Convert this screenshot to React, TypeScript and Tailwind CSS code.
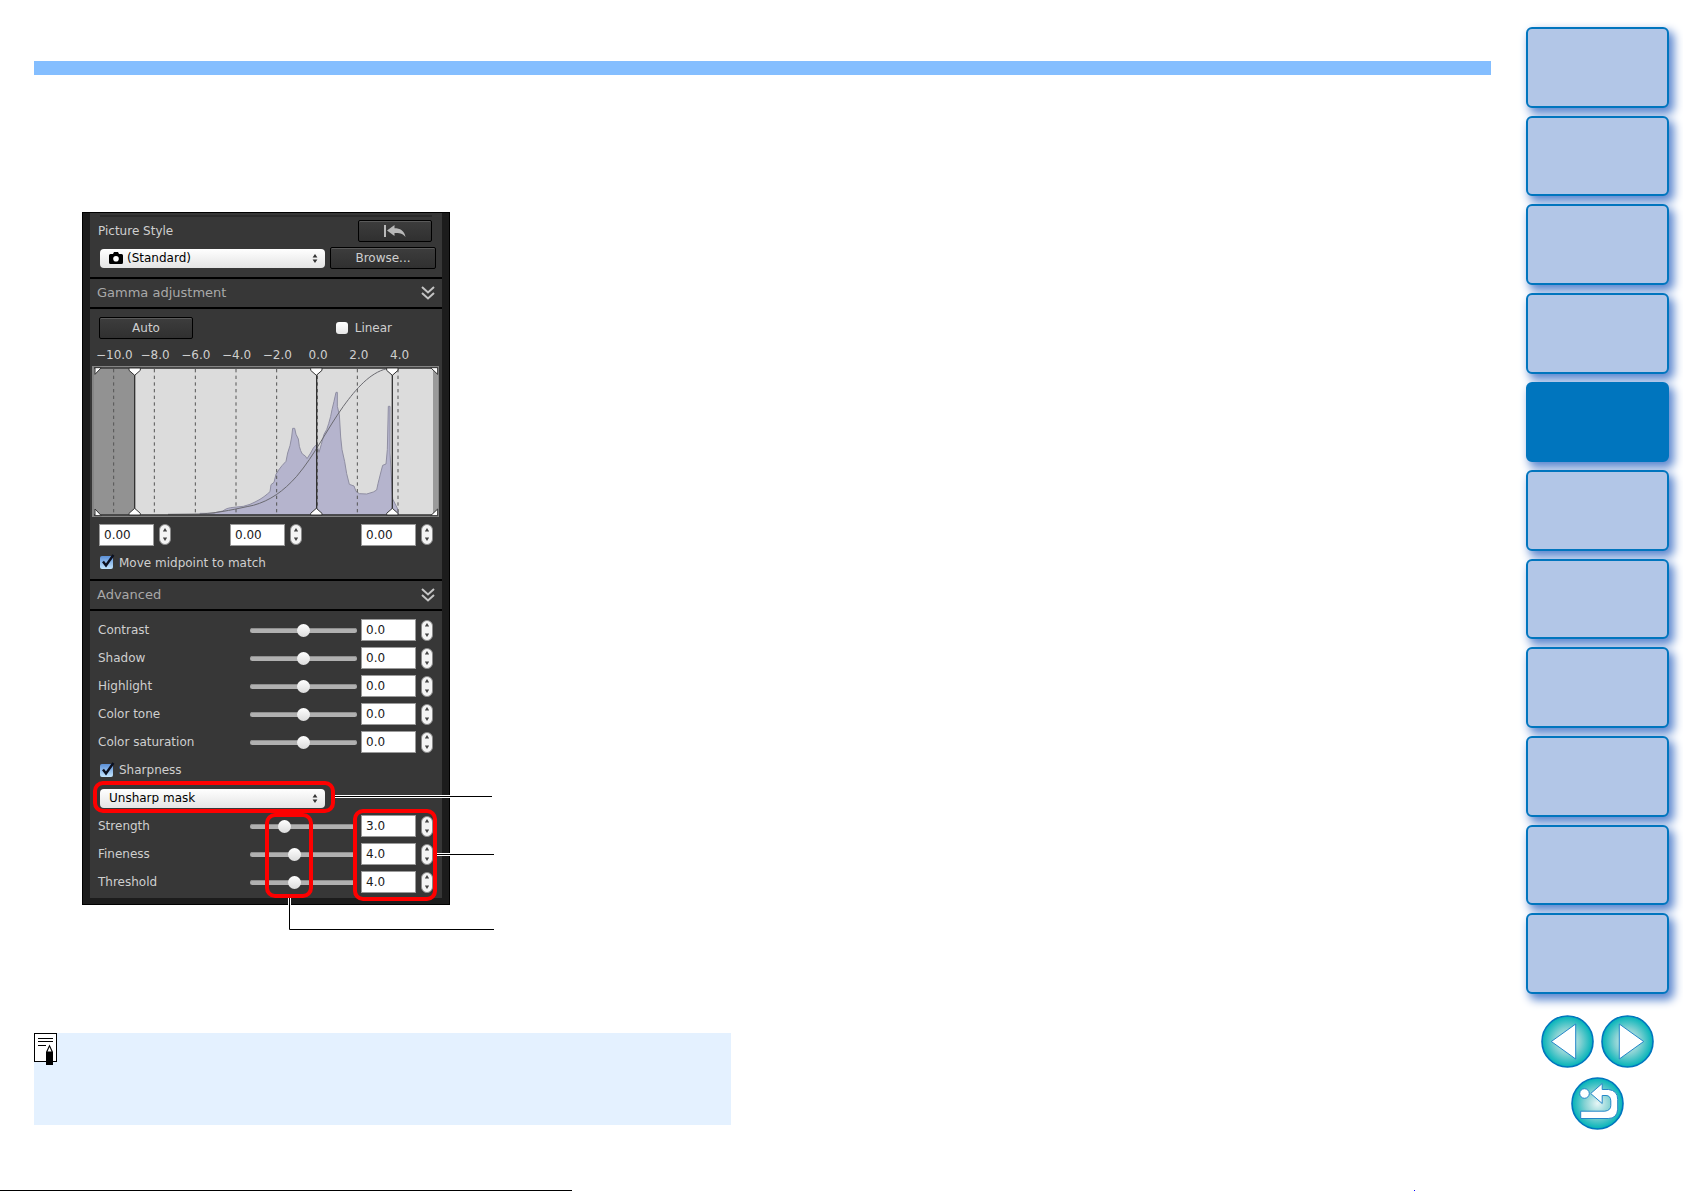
import { useState } from "react";

type Adjustment = {
  label: string;
  value: string;
  position: number;
};

const chapters = Array.from({ length: 11 }, (_, index) => index + 1);
const activeChapter = 5;

const stops = ["−10.0", "−8.0", "−6.0", "−4.0", "−2.0", "0.0", "2.0", "4.0"];

const toneAdjustments: Adjustment[] = [
  { label: "Contrast", value: "0.0", position: 5 },
  { label: "Shadow", value: "0.0", position: 5 },
  { label: "Highlight", value: "0.0", position: 5 },
  { label: "Color tone", value: "0.0", position: 5 },
  { label: "Color saturation", value: "0.0", position: 5 }
];

const sharpnessAdjustments: Adjustment[] = [
  { label: "Strength", value: "3.0", position: 3 },
  { label: "Fineness", value: "4.0", position: 4 },
  { label: "Threshold", value: "4.0", position: 4 }
];

const gridLines = [131, 253, 376, 498, 620, 742, 862, 984];

function Stepper({ label }: { label: string }) {
  return (
    <span className="flex h-[21px] w-3 shrink-0 flex-col overflow-hidden rounded-full border border-[#8a8a8a] bg-[#f4f4f4]">
      <button
        type="button"
        aria-label={`Increase ${label}`}
        className="flex flex-1 items-center justify-center"
      >
        <svg viewBox="0 0 6 4" className="h-1 w-1.5" fill="#444">
          <path d="M3 0 5.2 3.6H.8Z" />
        </svg>
      </button>
      <button
        type="button"
        aria-label={`Decrease ${label}`}
        className="flex flex-1 items-center justify-center"
      >
        <svg viewBox="0 0 6 4" className="h-1 w-1.5" fill="#444">
          <path d="M3 4 5.2.4H.8Z" />
        </svg>
      </button>
    </span>
  );
}

function NumberField({ label, value }: { label: string; value: string }) {
  return (
    <div className="flex items-center gap-[5px]">
      <input
        type="text"
        aria-label={label}
        defaultValue={value}
        className="h-[22px] w-[55px] border border-[#9a9a9a] bg-white px-1 text-xs text-[#1a1a1a]"
      />
      <Stepper label={label} />
    </div>
  );
}

function AdjustmentRow({ label, value, position }: Adjustment) {
  return (
    <div className="flex h-7 items-center pl-2">
      <label htmlFor={label} className="w-[152px]">
        {label}
      </label>
      <input
        id={label}
        type="range"
        min={0}
        max={10}
        step={1}
        defaultValue={position}
        className="mr-1 h-[14px] w-[107px] appearance-none bg-transparent [&::-webkit-slider-runnable-track]:h-[5px] [&::-webkit-slider-runnable-track]:rounded-full [&::-webkit-slider-runnable-track]:bg-[#b0b0b0] [&::-webkit-slider-runnable-track]:shadow-[inset_0_1px_0_#8e8e8e] [&::-webkit-slider-thumb]:-mt-1 [&::-webkit-slider-thumb]:size-[13px] [&::-webkit-slider-thumb]:appearance-none [&::-webkit-slider-thumb]:rounded-full [&::-webkit-slider-thumb]:bg-linear-to-b [&::-webkit-slider-thumb]:from-white [&::-webkit-slider-thumb]:to-[#dcdcdc]"
      />
      <NumberField label={`${label} value`} value={value} />
    </div>
  );
}

function CheckRow({ label }: { label: string }) {
  const [checked, setChecked] = useState(true);

  return (
    <label className="flex items-center gap-[6px]">
      <span className="relative size-[13px]">
        <input
          type="checkbox"
          checked={checked}
          onChange={(event) => setChecked(event.target.checked)}
          className="block size-[13px] appearance-none rounded-xs bg-linear-to-b from-[#5b8fd6] to-[#c4e6ff]"
        />
        {checked ? (
          <svg
            viewBox="0 0 15 15"
            className="pointer-events-none absolute -top-[2px] left-0 size-[15px]"
            fill="none"
            stroke="#0b1020"
            strokeWidth="2.4"
          >
            <path d="M3 7.5 6 11.5 13.4 1" />
          </svg>
        ) : null}
      </span>
      {label}
    </label>
  );
}

function SelectArrows() {
  return (
    <svg
      viewBox="0 0 6 9"
      className="pointer-events-none absolute top-[5px] right-[7px] h-[9px] w-[6px]"
      fill="#333"
    >
      <path d="M3 0 5.4 3.4H.6ZM3 9 5.4 5.6H.6Z" />
    </svg>
  );
}

function SectionHeader({ title }: { title: string }) {
  return (
    <div className="flex h-8 items-center justify-between border-y-2 border-black pr-[7px] pl-[7px] text-[13px] text-[#a9a9a9]">
      <h2>{title}</h2>
      <button type="button" aria-label={`Collapse ${title}`}>
        <svg
          viewBox="0 0 14 14"
          className="size-[14px]"
          fill="none"
          stroke="#c4c4c4"
          strokeWidth="2"
        >
          <path d="M1 1 7 6.5 13 1M1 7 7 12.5 13 7" />
        </svg>
      </button>
    </div>
  );
}

function Histogram() {
  return (
    <svg viewBox="66 49 1041 453" className="ml-[2px] block h-[151px] w-[347px]">
      <rect x="66" y="49" width="1041" height="453" fill="#858585" />
      <rect x="72" y="56" width="1030" height="440" fill="#dcdcdc" />
      <rect x="72" y="56" width="122" height="440" fill="#929292" />
      <rect x="1089" y="56" width="14" height="440" fill="#9a9a9a" />
      <path
        d="M390 495V491H432L440 488 458 484 470 477 482 474 500 472 520 470 540 464 555 457 570 449 582 441 592 433 600 426 603 405 612 398 618 374 626 361 636 348 648 335 653 310 660 288 665 262 668 236H674L678 254 685 268 688 290 692 303 697 313 706 319 711 327 722 310 730 295 740 284 747 308 754 284 762 254 770 240 776 222 782 200 786 180 792 155 798 128H802V170L808 195 812 262 816 300 824 336 830 372 838 404 852 409 858 425 868 432 890 433 910 427 920 421 924 402 932 370 938 347 948 343 952 300 955 170H960V310L968 448 974 460 984 480 986 495Z"
        fill="#b5b4cd"
        stroke="#8f8ea2"
        strokeWidth="3"
      />
      <g stroke="#555" strokeWidth="3" strokeDasharray="10 10">
        {gridLines.map((x) => (
          <path key={x} d={`M${x} 58V496`} />
        ))}
      </g>
      <path
        d="M294 494 390 493C455 489 500 477 550 467C600 453 640 425 680 380C735 315 770 240 820 170C860 115 900 70 950 57H966"
        fill="none"
        stroke="#6a6a70"
        strokeWidth="3"
      />
      <path
        d="M72 55H1104M72 496H1104M194 56V496M740 56V496M967 56V496"
        stroke="#333"
        strokeWidth="4"
      />
      <g fill="#fff" stroke="#333" strokeWidth="3">
        {[194, 739, 967].map((x) => (
          <path
            key={x}
            d={`M${x - 17} 55H${x + 17}V62L${x} 77 ${x - 17} 62ZM${x - 17} 496H${x + 17}V491L${x} 476 ${x - 17} 491Z`}
          />
        ))}
        <path d="M75 54H94L75 74ZM75 498H94L75 478ZM1103 54H1082L1103 74ZM1103 498H1082L1103 478Z" />
      </g>
    </svg>
  );
}

function ToolPalette() {
  return (
    <section
      aria-label="Tool palette"
      className="w-[368px] border border-black bg-[#1c1c1c] px-[7px] pb-[6px] font-['DejaVu_Sans',sans-serif] text-xs text-[#cfcfcf]"
    >
      <div className="bg-[#373737] pb-[2px]">
        <div className="pt-[2px] pb-2">
          <div className="mr-[10px] ml-[10px] h-[2px] bg-[#2a2a2a]" />
          <div className="mt-[3px] flex items-center justify-between pr-[10px] pl-2">
            <label htmlFor="style">Picture Style</label>
            <button
              type="button"
              aria-label="Reset picture style"
              className="flex h-[22px] w-[74px] items-center justify-center rounded-xs border border-black bg-linear-to-b from-[#3d3d3d] to-[#303030] shadow-[inset_0_1px_0_#5a5a5a]"
            >
              <svg viewBox="0 0 22 14" className="h-[14px] w-[22px]" fill="#b9b9b9">
                <path d="M0 1H2V13H0ZM3 6.5 10.5 1V4.2C16 4.2 20.5 6.5 21.5 13C18.5 9.3 15 9 10.5 9V12Z" />
              </svg>
            </button>
          </div>
          <div className="mt-[5px] flex items-center gap-[5px] pl-[10px]">
            <div className="relative">
              <select
                id="style"
                className="block h-[19px] w-[225px] appearance-none rounded-[4px] bg-linear-to-b from-white to-[#e4e4e4] pl-[27px] leading-none text-black"
              >
                <option>(Standard)</option>
              </select>
              <svg
                viewBox="0 0 14 12"
                className="pointer-events-none absolute top-[3px] left-[9px] h-3 w-[14px]"
              >
                <path
                  d="M1.5 2H4L5 0H9L10 2H12.5Q14 2 14 3.5V10.5Q14 12 12.5 12H1.5Q0 12 0 10.5V3.5Q0 2 1.5 2Z"
                  fill="#000"
                />
                <circle cx="7" cy="6.7" r="2.8" fill="#fff" />
              </svg>
              <SelectArrows />
            </div>
            <button
              type="button"
              className="h-[22px] w-[106px] rounded-xs border border-black bg-linear-to-b from-[#3d3d3d] to-[#303030] shadow-[inset_0_1px_0_#5a5a5a]"
            >
              Browse...
            </button>
          </div>
        </div>

        <SectionHeader title="Gamma adjustment" />
        <div className="pt-2">
          <div className="flex items-center justify-between pr-[50px] pl-[9px]">
            <button
              type="button"
              className="h-[22px] w-[94px] rounded-xs border border-black bg-linear-to-b from-[#3d3d3d] to-[#303030] shadow-[inset_0_1px_0_#5a5a5a]"
            >
              Auto
            </button>
            <label className="flex items-center gap-[7px]">
              <input
                type="checkbox"
                className="size-3 appearance-none rounded-[3px] bg-linear-to-b from-white to-[#e6e6e6]"
              />
              Linear
            </label>
          </div>
          <div className="ml-1 grid h-[27px] w-[326px] grid-cols-8 items-center pt-[5px] text-center">
            {stops.map((stop) => (
              <span key={stop}>{stop}</span>
            ))}
          </div>
          <Histogram />
          <div className="mt-[6px] flex h-[23px] items-center justify-between pr-[9px] pl-[9px]">
            <NumberField label="Black point" value="0.00" />
            <NumberField label="Midpoint" value="0.00" />
            <NumberField label="White point" value="0.00" />
          </div>
          <div className="flex h-[33px] items-center pl-[10px]">
            <CheckRow label="Move midpoint to match" />
          </div>
        </div>

        <SectionHeader title="Advanced" />
        <div className="pt-[5px]">
          {toneAdjustments.map((item) => (
            <AdjustmentRow key={item.label} {...item} />
          ))}
          <div className="flex h-7 items-center pl-[10px]">
            <CheckRow label="Sharpness" />
          </div>
          <div className="flex h-7 items-center pl-[10px]">
            <div className="relative">
              <select
                aria-label="Sharpness method"
                className="block h-[19px] w-[225px] appearance-none rounded-[4px] bg-linear-to-b from-white to-[#e4e4e4] pl-[9px] leading-none text-black"
              >
                <option>Unsharp mask</option>
              </select>
              <SelectArrows />
            </div>
          </div>
          {sharpnessAdjustments.map((item) => (
            <AdjustmentRow key={item.label} {...item} />
          ))}
        </div>
      </div>
    </section>
  );
}

// Red frames and leader lines drawn over the palette
function Callouts() {
  return (
    <svg
      viewBox="0 0 414 720"
      className="pointer-events-none absolute top-0 left-0 h-[720px] w-[414px]"
      fill="none"
    >
      <g stroke="#fff" strokeWidth="3">
        <path d="M252 584.5H368M355 642.5H368M207.5 686V694" />
      </g>
      <g stroke="#000">
        <path d="M252 584.5H410M355 642.5H412M207.5 686V717.5H412" />
      </g>
      <g stroke="#fe0000" strokeWidth="4">
        <rect x="13" y="571" width="238" height="28" rx="8" />
        <rect x="185" y="603" width="44" height="81" rx="8" />
        <rect x="273" y="599" width="80" height="88" rx="8" />
      </g>
    </svg>
  );
}

function RoundButton({ label, path }: { label: string; path: string }) {
  return (
    <a href="#page" aria-label={label}>
      <svg viewBox="0 0 53 53" className="block size-[53px]">
        <defs>
          <radialGradient id="teal">
            <stop offset="0" stopColor="#e8f6f6" />
            <stop offset="0.5" stopColor="#85d2d3" />
            <stop offset="1" stopColor="#00b3b8" />
          </radialGradient>
        </defs>
        <circle
          cx="26.5"
          cy="26.5"
          r="25.5"
          fill="url(#teal)"
          stroke="#0075be"
          strokeWidth="1.6"
        />
        <path d={path} fill="#fff" stroke="#2386c8" strokeWidth="1" />
      </svg>
    </a>
  );
}

function ChapterNav() {
  return (
    <aside className="mr-[14px] w-[143px] shrink-0 pt-[27px]">
      <nav aria-label="Chapters" className="flex h-[967px] flex-col gap-2">
        {chapters.map((chapter) => (
          <a
            key={chapter}
            href={`#chapter-${chapter}`}
            aria-label={`Chapter ${chapter}`}
            className={
              chapter === activeChapter
                ? "flex-1 rounded-md border-2 border-[#0075be] bg-[#0075be] shadow-[4px_5px_10px_1px_#5c87cf]"
                : "flex-1 rounded-md border-2 border-[#0075be] bg-[#b2c6e7] shadow-[4px_5px_10px_1px_#5c87cf]"
            }
          />
        ))}
      </nav>
      <div className="mt-[21px] flex flex-wrap justify-center gap-x-[7px] gap-y-[9px]">
        <RoundButton label="Previous page" path="M34.7 9V44L10.3 26.5Z" />
        <RoundButton label="Next page" path="M18.3 9V44L42.7 26.5Z" />
        <RoundButton
          label="Return"
          path="M18.3 16.5A4.8 4.8 0 1 1 8.7 16.5A4.8 4.8 0 1 1 18.3 16.5ZM19.7 16.5 31.2 6.5V12.5H37.5Q46.7 13.5 46.7 22.5V32.2Q46 41.5 37.2 41.5H9.7V34.2H33.8Q39.8 33.5 39.8 28.5V23.8Q39.5 18.5 35 18.5H31.2V26.5Z"
        />
      </div>
    </aside>
  );
}

function NoteBox() {
  return (
    <div className="mt-32 h-[92px] w-full max-w-[697px] bg-[#e4f1ff]">
      <svg viewBox="0 0 23 32" className="block h-8 w-[23px]">
        <rect x="0.5" y="0.5" width="22" height="28" fill="#fff" stroke="#000" />
        <path d="M4 5.5H19M4 8.5H19M4 12.5H12" stroke="#000" />
        <path d="M12 19 15.5 11.5 19 19V32H12Z" fill="#000" />
        <path d="M13.5 18.5 15.5 14 17.5 18.5Z" fill="#fff" />
      </svg>
    </div>
  );
}

export default function App() {
  return (
    <div className="min-h-screen overflow-x-hidden bg-white">
      <div className="flex gap-[35px]">
        <main className="min-w-0 flex-1 pt-[61px] pb-[65px] pl-[34px]">
          <div className="h-[14px] bg-[#84beff]" />
          <div className="relative mt-[137px] ml-12">
            <ToolPalette />
            <Callouts />
          </div>
          <NoteBox />
        </main>
        <ChapterNav />
      </div>
      <div className="flex h-px">
        <div className="w-[34%] bg-black" />
        <div className="ml-[50%] w-px bg-[#0000ff]" />
      </div>
    </div>
  );
}
